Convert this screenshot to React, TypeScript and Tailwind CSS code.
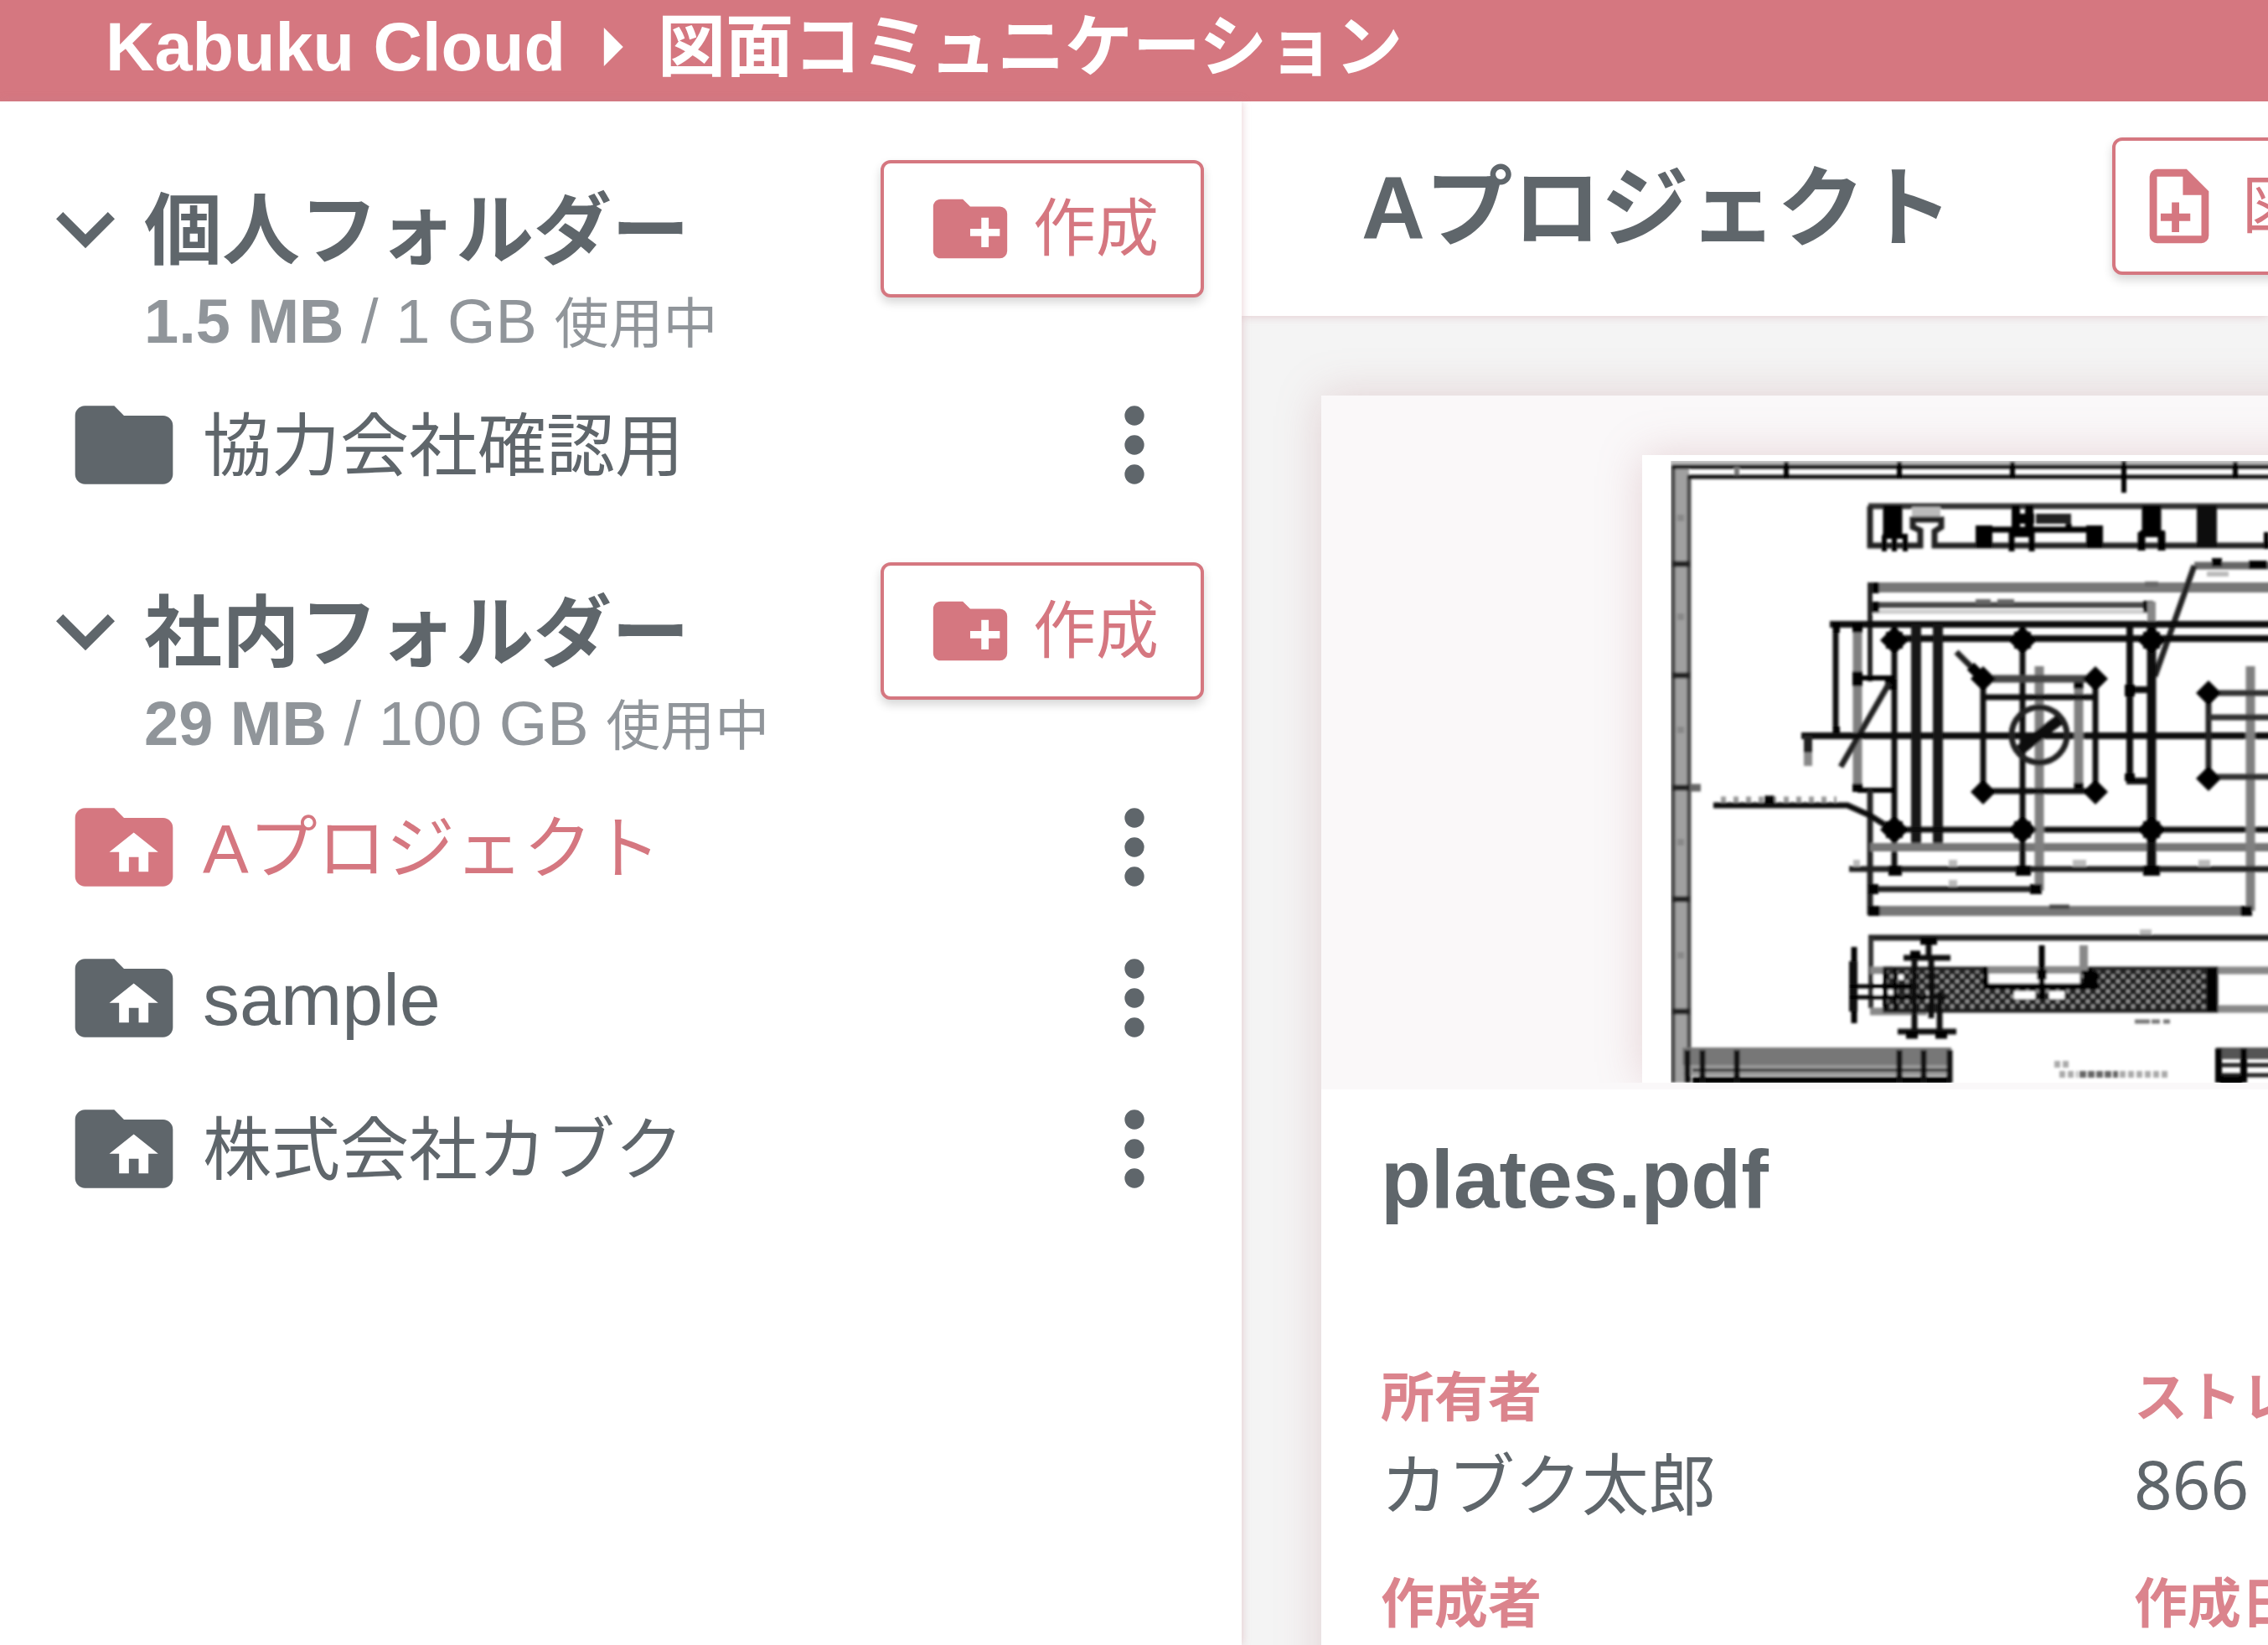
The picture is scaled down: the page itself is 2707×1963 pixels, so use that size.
import { clsx } from 'clsx';

type IconProps = {
  path: string;
  className?: string;
};

type Folder = {
  name: string;
  icon: string;
  active?: boolean;
};

type FolderGroup = {
  title: string;
  used: string;
  limit: string;
  folders: Folder[];
};

const icons = {
  chevronDown: 'M7.41 8.58 12 13.17l4.59-4.59L18 10l-6 6-6-6z',
  arrowRight: 'M10 17l5-5-5-5z',
  folder:
    'M10 4H4C2.89 4 2 4.89 2 6v12a2 2 0 0 0 2 2h16a2 2 0 0 0 2-2V8c0-1.11-.9-2-2-2h-8z',
  folderHome:
    'M10 4H4C2.89 4 2 4.89 2 6v12a2 2 0 0 0 2 2h16a2 2 0 0 0 2-2V8c0-1.11-.9-2-2-2h-8zM11 13H9l5-4 5 4h-2v4h-2v-3h-2v3h-2z',
  folderPlus:
    'M10 4l2 2h8a2 2 0 0 1 2 2v10a2 2 0 0 1-2 2H4c-1.11 0-2-.9-2-2V6c0-1.11.89-2 2-2zM15 9v3h-3v2h3v3h2v-3h3v-2h-3V9z',
  filePlus:
    'M14 2H6a2 2 0 0 0-2 2v16a2 2 0 0 0 2 2h12a2 2 0 0 0 2-2V8zM18 20H6V4h7v5h5zM10 11h2v3h3v2h-3v3h-2v-3H7v-2h3z',
  dots: 'M12 16a2 2 0 1 1 0 4 2 2 0 0 1 0-4m0-6a2 2 0 1 1 0 4 2 2 0 0 1 0-4m0-6a2 2 0 1 1 0 4 2 2 0 0 1 0-4',
};

const groups: FolderGroup[] = [
  {
    title: '個人フォルダー',
    used: '1.5 MB',
    limit: '1 GB',
    folders: [{ name: '協力会社確認用', icon: icons.folder }],
  },
  {
    title: '社内フォルダー',
    used: '29 MB',
    limit: '100 GB',
    folders: [
      { name: 'Aプロジェクト', icon: icons.folderHome, active: true },
      { name: 'sample', icon: icons.folderHome },
      { name: '株式会社カブク', icon: icons.folderHome },
    ],
  },
];

const details = [
  { label: '所有者', value: 'カブク太郎' },
  { label: 'ストレージ', value: '866 KB' },
  { label: '作成者', value: 'カブク太郎' },
  { label: '作成日', value: '2020/01/01' },
];

function Icon({ path, className }: IconProps) {
  return (
    <svg viewBox="0 0 24 24" aria-hidden="true" className={clsx('shrink-0 fill-current', className)}>
      <path d={path} fillRule="evenodd" />
    </svg>
  );
}

function ActionButton({ path, label, className }: { path: string; label: string; className: string }) {
  return (
    <button
      type="button"
      className={clsx(
        'flex h-[164px] shrink-0 items-center gap-[22px] rounded-xl border-4 border-[#d57780] bg-white text-[75px] leading-none whitespace-nowrap text-[#d57780] shadow-[0_6px_12px_rgba(0,0,0,0.16)]',
        className
      )}
    >
      <Icon path={path} className="size-[106px]" />
      {label}
    </button>
  );
}

function FolderRow({ folder }: { folder: Folder }) {
  return (
    <li className="flex h-[180px] items-center pr-[58px] pl-[78px]">
      <a
        href="#folder"
        className={clsx(
          'flex min-w-0 flex-1 items-center gap-6 text-[82px] leading-none',
          folder.active && 'text-[#d57780]'
        )}
      >
        <Icon path={folder.icon} className="size-[140px]" />
        <span className={clsx('pt-1', folder.name === 'sample' && 'text-[88px]')}>{folder.name}</span>
      </a>
      <button type="button" aria-label={`${folder.name} メニュー`}>
        <Icon path={icons.dots} className="size-[140px]" />
      </button>
    </li>
  );
}

function Sidebar() {
  return (
    <aside className="z-10 flex w-[1482px] shrink-0 flex-col gap-[50px] bg-white pt-[70px] shadow-[0_0_10px_rgba(200,130,140,0.4)]">
      {groups.map((group) => (
        <section key={group.title}>
          <div className="flex h-[250px] items-start justify-between pr-[45px] pl-8">
            <div>
              <button type="button" className="flex h-[164px] items-center">
                <Icon path={icons.chevronDown} className="size-[140px]" />
                <span className="pt-1.5 text-[93px] leading-none font-bold">{group.title}</span>
              </button>
              <p className="-mt-2 pl-[140px] text-[65px] leading-none text-[#90959a]">
                <span className="text-[74px]">
                  <b>{group.used}</b> / {group.limit}{' '}
                </span>
                使用中
              </p>
            </div>
            <ActionButton path={icons.folderPlus} label="作成" className="px-[50px]" />
          </div>
          <ul>
            {group.folders.map((folder) => (
              <FolderRow key={folder.name} folder={folder} />
            ))}
          </ul>
        </section>
      ))}
    </aside>
  );
}

function Dots({ points, r }: { points: number[][]; r: number }) {
  return (
    <g fill="#000" stroke="none">
      {points.map(([x, y]) => (
        <path key={`${x}-${y}`} d={`M${x - r} ${y}L${x} ${y - r}L${x + r} ${y}L${x} ${y + r}z`} />
      ))}
    </g>
  );
}

function DrawingPreview() {
  return (
    <svg
      viewBox="0 0 1174 749"
      role="img"
      aria-label="plates.pdf"
      className="h-[749px] w-[1174px] bg-white shadow-[0_0_50px_rgba(180,120,125,0.28)]"
    >
      <defs>
        <filter id="soft" x="0" y="0" width="100%" height="100%">
          <feGaussianBlur stdDeviation="1.8" />
        </filter>
        <pattern id="hatch" width="12" height="12" patternUnits="userSpaceOnUse">
          <rect width="12" height="12" fill="#222" />
          <path d="M2 2h4v4H2zM8 8h4v4H8z" fill="#999" />
        </pattern>
      </defs>
      <g filter="url(#soft)" fill="none" stroke="#000">
        {/* sheet frame */}
        <path d="M46 10V749" stroke="#a0a0a0" strokeWidth="20" />
        <path d="M37 11V749M56 25V749" stroke="#4a4a4a" strokeWidth="5" />
        <path d="M34 9H1174" stroke="#bbb" strokeWidth="6" />
        <path d="M36 14H1174M54 26H1174" stroke="#111" strokeWidth="5" />
        <path d="M113 14v10" stroke="#777" strokeWidth="6" />
        <path d="M172 8v20M307 8v20M442 8v20M575 7v38M708 8v20" strokeWidth="6" />
        <path d="M36 130h21M36 263h21M36 397h21M36 530h21M36 664h21" stroke="#222" strokeWidth="7" />
        <path d="M57 397h13" stroke="#666" strokeWidth="9" />
        <path d="M42 75h8M42 193h8M42 328h8M42 462h8M42 597h8" stroke="#888" strokeWidth="8" />

        {/* side elevation */}
        <path d="M270 61H1174" stroke="#333" strokeWidth="7" />
        <path d="M322 69h34" stroke="#bbb" strokeWidth="14" />
        <path d="M272 61v47h60V90l-9-4v-9h34v9l-8 5v17H1174" stroke="#222" strokeWidth="7" />
        <path d="M299 60v38M608 60v36" strokeWidth="23" />
        <path d="M289 96v19M301 96v19M314 94v21M287 97h28" strokeWidth="6" />
        <path d="M408 84v27M540 84v27" strokeWidth="20" />
        <path d="M398 89h152M509 82v9M441 88v27M465 88v27" strokeWidth="7" />
        <path d="M446 60v36M462 60v36" strokeWidth="10" />
        <path d="M442 76h26M442 92h26" strokeWidth="12" />
        <path d="M470 76h42" stroke="#222" strokeWidth="12" />
        <path d="M596 92v22M620 92v22" strokeWidth="9" />
        <path d="M594 94h30" strokeWidth="8" />
        <path d="M674 60v50" stroke="#111" strokeWidth="24" />
        <path d="M745 92v20" strokeWidth="6" />

        {/* upper dimensions */}
        <path d="M270 158H1174" stroke="#777" strokeWidth="12" />
        <path d="M270 179H607" stroke="#444" strokeWidth="7" />
        <path d="M270 187H607" stroke="#ccc" strokeWidth="5" />
        <path d="M277 152v13M277 175v13M604 174v14" strokeWidth="12" />
        <path d="M398 175h18M424 175h20M600 154h16" stroke="#666" strokeWidth="6" />
        <path d="M272 152V270" stroke="#222" strokeWidth="6" />
        <path d="M608 175V205" stroke="#888" strokeWidth="10" />
        <path d="M1174 132H659" stroke="#666" strokeWidth="9" />
        <path d="M659 132L612 264" stroke="#222" strokeWidth="7" />
        <path d="M680 128h12M724 131h22" strokeWidth="10" />
        <path d="M674 142h26" stroke="#bbb" strokeWidth="6" />

        {/* plate outline */}
        <path d="M224 202H1174M301 219H1174" stroke="#111" strokeWidth="8" />
        <path d="M257 202V397" stroke="#808080" strokeWidth="11" />
        <path d="M231 202V335M301 202V494" stroke="#111" strokeWidth="7" />
        <path d="M228 206h8M228 330h8M257 201v11M257 258v18M257 392v10" strokeWidth="12" />
        <path d="M257 266h44M257 400h44" strokeWidth="6" />
        <path d="M290 274h14" strokeWidth="12" />
        <path d="M295 272L237 372" stroke="#222" strokeWidth="7" />
        <path d="M190 335H1174" stroke="#111" strokeWidth="8" />
        <path d="M198 335v28" stroke="#222" strokeWidth="10" />
        <path d="M198 355v16" stroke="#888" strokeWidth="10" />
        <path d="M327 202V470M353 202V470" stroke="#181818" strokeWidth="12" />
        <path d="M272 400V549" stroke="#222" strokeWidth="7" />
        <path d="M301 447H1174" stroke="#111" strokeWidth="7" />
        <path d="M272 468H1174" stroke="#777" strokeWidth="10" />
        <path d="M85 418H245L272 430L294 444" stroke="#111" strokeWidth="7" />
        <path d="M94 411h138" stroke="#999" strokeWidth="7" strokeDasharray="6 9" />
        <path d="M146 411h12" strokeWidth="9" />

        {/* hole pattern */}
        <path d="M454 202V494" stroke="#111" strokeWidth="7" />
        <path d="M608 202V494" stroke="#111" strokeWidth="11" />
        <path d="M582 200V389H608M582 280h26" stroke="#111" strokeWidth="8" />
        <path d="M582 274v14M582 380v9" strokeWidth="12" />
        <path d="M474 252V520M726 252V544M521 265V397" stroke="#808080" strokeWidth="11" />
        <path d="M521 265v14M521 391v12" strokeWidth="11" />
        <path d="M407 267V402M541 267V402M407 289H541M407 401H541" stroke="#111" strokeWidth="7" />
        <path d="M407 267H541" stroke="#444" strokeWidth="9" />
        <path d="M375 235L404 264" stroke="#222" strokeWidth="7" />
        <path d="M392 252L404 264" strokeWidth="12" />
        <circle cx="474" cy="334" r="33" stroke="#222" strokeWidth="7" />
        <path d="M451 352L474 334L498 316" stroke="#111" strokeWidth="13" />
        <path d="M676 284V385" stroke="#222" strokeWidth="7" />
        <path d="M676 284H1174M676 313H1174M676 384H1174" stroke="#333" strokeWidth="7" />
        <Dots r={17} points={[[301, 221], [454, 221], [608, 221], [301, 447], [454, 447], [608, 447]]} />
        <Dots r={15} points={[[407, 267], [541, 267], [407, 402], [541, 402], [676, 284], [676, 386]]} />
        <path d="M291 221h20M444 221h20M598 221h20M291 447h20M444 447h20M598 447h20" strokeWidth="20" />
        <path d="M400 267h14M534 267h14M400 402h14M534 402h14M669 284h14M669 386h14" strokeWidth="14" />

        {/* lower dimensions */}
        <path d="M247 494H1174M270 518H470" stroke="#222" strokeWidth="7" />
        <path d="M270 544H722" stroke="#777" strokeWidth="12" />
        <path d="M294 496h16M446 496h18M598 496h20M270 518h12M463 518h14M270 544h14M714 544h14" strokeWidth="12" />
        <path d="M366 487h10M366 511h10M514 487h16M664 487h14M252 487h8M594 570h14" stroke="#bbb" strokeWidth="8" />
        <path d="M486 539h24" stroke="#444" strokeWidth="5" />

        {/* section view */}
        <path d="M270 576H1174" stroke="#222" strokeWidth="7" />
        <path d="M273 576V660" stroke="#333" strokeWidth="6" />
        <path d="M685 615H1174M685 661H1174M413 615H527M272 615H300M272 664H340" stroke="#888" strokeWidth="9" />
        <path d="M290 613H685V663H290z" fill="url(#hatch)" stroke="#222" strokeWidth="5" />
        <path d="M413 618H522V633H413z" fill="#fff" stroke="#fff" />
        <path d="M410 611v23H541v-18" strokeWidth="7" />
        <path d="M413 615H524" stroke="#888" strokeWidth="8" />
        <path d="M444 640h25v9h-25zM486 640h18v9h-18z" fill="#fff" stroke="none" />
        <path d="M477 585V650" strokeWidth="7" />
        <path d="M477 614v12M532 612v22M680 612v52" strokeWidth="12" />
        <path d="M527 585V615" stroke="#888" strokeWidth="10" />
        <path d="M276 620h10v9h-10zM276 638h10v6h-10zM294 638h6v6h-6zM306 620h6v6h-6zM340 640h6v12h-6z" fill="#fff" stroke="none" />
        <path d="M253 587V678" strokeWidth="7" />
        <path d="M252 604v60" stroke="#111" strokeWidth="10" />
        <path d="M247 634h78M247 647h115M290 613v50M302 613v50" strokeWidth="5" />
        <path d="M342 576V600M312 600h56M325 600V688M345 600V672M355 640V688M305 688h70" stroke="#111" strokeWidth="7" />
        <path d="M332 580h20M320 596h12M315 692h14M350 692h14" strokeWidth="9" />
        <path d="M588 676h42" stroke="#777" strokeWidth="5" strokeDasharray="18 2 10 4" />

        {/* title blocks */}
        <path d="M48 718H369" stroke="#777" strokeWidth="22" />
        <path d="M48 731H369M48 738H369" stroke="#999" strokeWidth="6" />
        <path d="M60 734H369" stroke="#222" strokeWidth="3" />
        <path d="M60 746H369" strokeWidth="8" />
        <path d="M72 710V749M113 710V749M307 710V749M336 710V749M367 710V749M54 710V749" stroke="#111" strokeWidth="7" />
        <path d="M685 714H1174" stroke="#555" strokeWidth="14" />
        <path d="M685 728H1174M685 740H1174" stroke="#222" strokeWidth="5" />
        <path d="M688 708V749M718 708V749" strokeWidth="8" />
        <path d="M690 746h26" strokeWidth="10" />
        <path d="M492 727h20M498 739h22M570 739h60" stroke="#aaa" strokeWidth="8" strokeDasharray="7 3" />
        <path d="M522 739h46" stroke="#666" strokeWidth="8" strokeDasharray="8 2" />
      </g>
    </svg>
  );
}

function DrawingCard() {
  return (
    <article className="w-[1940px] shrink-0 bg-white shadow-[0_0_50px_rgba(180,120,125,0.28)]">
      <div className="bg-[#faf8f9] pb-2">
        <div className="flex justify-center overflow-hidden pt-[71px]">
          <DrawingPreview />
        </div>
      </div>
      <div className="px-[71px] pt-[47px] pb-[71px]">
        <h3 className="h-[279px] text-[98px] leading-[120px] font-bold">plates.pdf</h3>
        <dl className="grid grid-cols-2">
          {details.map((item) => (
            <div key={item.label} className="h-[246px]">
              <dt className="text-[64px] leading-[84px] font-bold text-[#db848d]">{item.label}</dt>
              <dd className="font-['Noto_Sans','Noto_Sans_CJK_JP',sans-serif] text-[80px] leading-[120px]">
                {item.value}
              </dd>
            </div>
          ))}
        </dl>
      </div>
    </article>
  );
}

export default function App() {
  return (
    <div
      lang="ja"
      className="flex h-screen flex-col overflow-hidden bg-[#f4f4f4] font-['Liberation_Sans','Noto_Sans_CJK_JP',sans-serif] text-[#5f666b]"
    >
      <header className="h-[121px] shrink-0 bg-[#d57780] text-white">
        <nav className="flex h-28 items-center pl-[126px] text-[81px] leading-none font-bold">
          <a href="#home" className="whitespace-nowrap">
            Kabuku Cloud
          </a>
          <Icon path={icons.arrowRight} className="size-[110px]" />
          <a href="#drawings" className="whitespace-nowrap">
            図面コミュニケーション
          </a>
        </nav>
      </header>
      <div className="flex min-h-0 flex-1">
        <Sidebar />
        <main className="flex min-w-0 flex-1 flex-col overflow-hidden">
          <div className="flex h-[256px] shrink-0 items-center gap-[190px] bg-white pb-1.5 pl-[143px] shadow-[0_0_10px_rgba(200,130,140,0.4)]">
            <h2 className="pt-1 text-[105px] leading-none font-bold whitespace-nowrap">Aプロジェクト</h2>
            <ActionButton path={icons.filePlus} label="図面" className="px-[23px]" />
          </div>
          <div className="flex px-[95px] pt-[95px]">
            <DrawingCard />
          </div>
        </main>
      </div>
    </div>
  );
}
